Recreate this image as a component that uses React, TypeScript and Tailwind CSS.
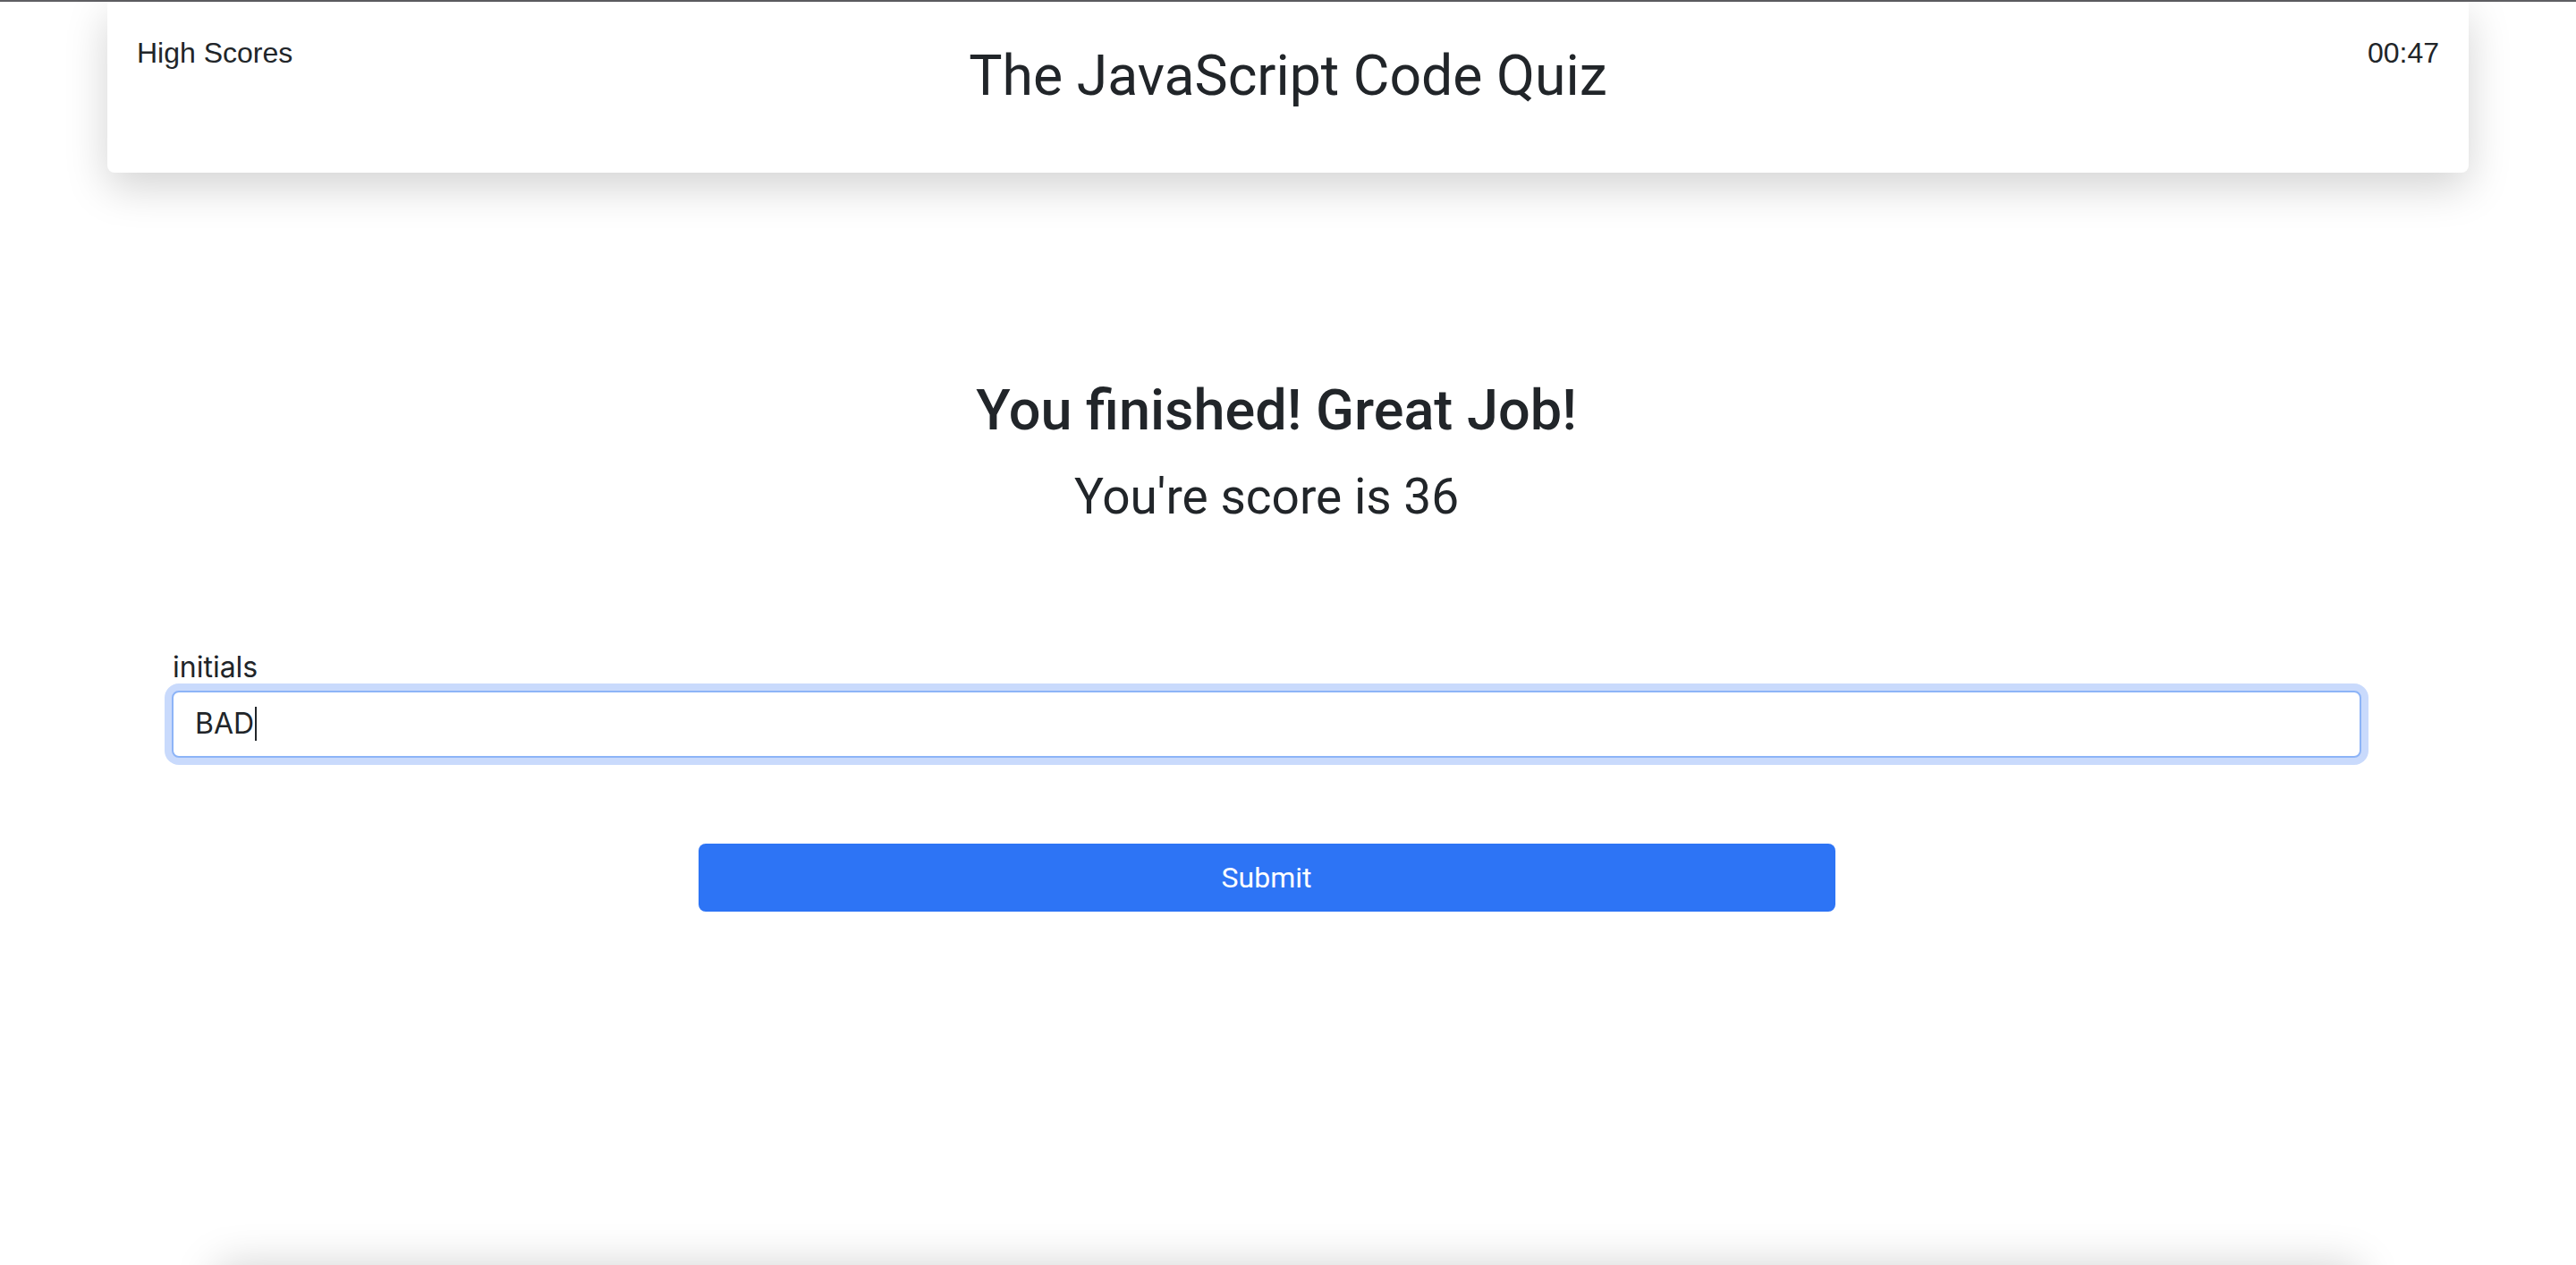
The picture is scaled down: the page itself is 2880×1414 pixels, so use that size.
export default function App() {
  return (
    <div className="h-[1414px] overflow-hidden bg-white text-[#212529] font-['Liberation_Sans',Arial,sans-serif]">
      {/* Top window edge */}
      <div className="h-[2px] bg-[#5f5f63]" />

      {/* Header */}
      <header className="mx-[120px] h-[191px] rounded-b-lg bg-white shadow-[0_16px_48px_rgba(0,0,0,0.175)] px-[33px] pt-[33px] grid grid-cols-[1fr_auto_1fr] items-start relative z-10">
        <a className="text-[32px] leading-[48px] justify-self-start">High Scores</a>
        <h1 className="mt-[12px] text-[62.5px] leading-[1.2] font-['Roboto',sans-serif]">The JavaScript Code Quiz</h1>
        <div className="text-[32px] leading-[48px] justify-self-end">00:47</div>
      </header>

      {/* Result */}
      <main className="ml-[192px] w-[2448px] flex flex-col">
        <h2 className="mt-[228px] pl-[22px] text-center text-[63px] leading-[1.2] font-medium font-['Roboto',sans-serif]">You finished! Great Job!</h2>
        <h3 className="mt-[25px] text-center text-[55px] leading-[1.2] font-['Roboto',sans-serif]">You're score is 36</h3>

        <label className="mt-[134px] ml-[1px] text-[32px] leading-[48px] font-['Inter',sans-serif]">initials</label>
        <div className="mt-[2px] h-[75px] rounded-lg border-2 border-[#8db4f7] ring-8 ring-[#c9dafc] bg-white px-[24px] flex items-center text-[32px] font-['Inter',sans-serif]">
          BAD
          <span className="ml-[1px] w-[2px] h-[38px] bg-[#212529]" />
        </div>

        <button className="mt-[96px] self-center w-[1271px] h-[76px] rounded-lg bg-[#2d74f5] text-white text-[32px] font-['Roboto',sans-serif]">
          Submit
        </button>
      </main>

      {/* Next card, below the fold */}
      <div className="mt-[395px] mx-[242px] h-[300px] rounded-lg bg-white shadow-[0_0_48px_rgba(0,0,0,0.175)]" />
    </div>
  );
}
